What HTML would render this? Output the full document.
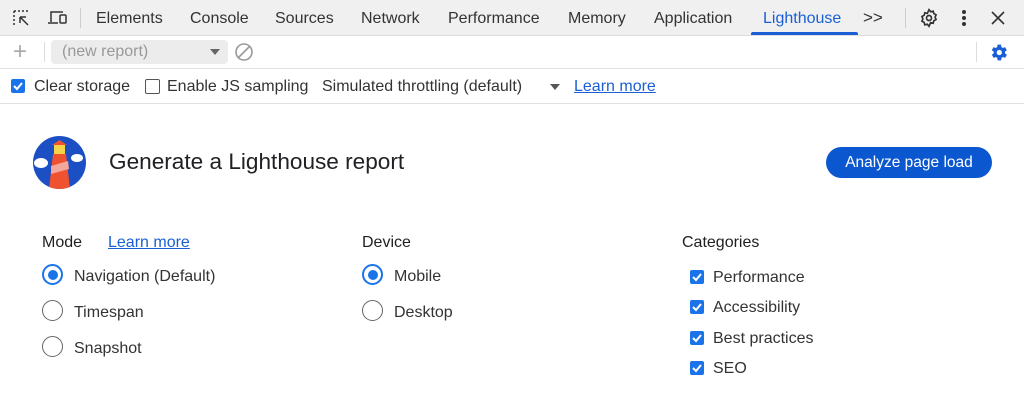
<!DOCTYPE html><html><head><style>
*{box-sizing:border-box;margin:0;padding:0}
body{width:1024px;height:404px;overflow:hidden;background:#fff;font-family:"Liberation Sans",sans-serif;color:#1f1f1f;position:relative}
.a{position:absolute;white-space:nowrap}
.tabs{position:absolute;left:0;top:0;width:1024px;height:36px;background:#f0f0f0;border-bottom:1px solid #ddd}
.t{position:absolute;top:10px;font-size:16px;color:#333}
.row2{position:absolute;top:36px;left:0;width:1024px;height:33px;border-bottom:1px solid #e0e0e0}
.row3{position:absolute;top:69px;left:0;width:1024px;height:35px;border-bottom:1px solid #e0e0e0}
.f{font-size:16px;color:#333}
.radio{position:absolute;width:21px;height:21px;border-radius:50%;border:1.5px solid #666}
.radio.on{border:2px solid #1a73e8}
.radio.on::after{content:"";position:absolute;left:3.5px;top:3.5px;width:10px;height:10px;border-radius:50%;background:#1a73e8}
.cb{position:absolute;width:14px;height:14px;border-radius:2px;background:#1a73e8}
.cb svg{position:absolute;left:1px;top:1px}
.lk{color:#1a5fd6;text-decoration:underline}
</style></head><body>
<div class="tabs">
<svg class="a" style="left:12px;top:9px" width="20" height="20" viewBox="0 0 20 20" fill="none" stroke="#333" stroke-width="1.5"><path d="M2 2h2M6 2h2M10 2h2M14 2h2M2 2v2M2 6v2M2 10v2M2 14v2" stroke-dasharray="2 2"/><path d="M8 8l8 8M8 8h6M8 8v6"/></svg>
<svg class="a" style="left:47px;top:9px" width="22" height="18" viewBox="0 0 22 18" fill="none" stroke="#333" stroke-width="1.5"><path d="M4 13V3h12M1 14h10"/><rect x="13" y="6" width="6" height="8" rx="1"/></svg>
<div class="a" style="left:80px;top:8px;width:1px;height:20px;background:#ccc"></div>
<div class="t" style="left:96px">Elements</div>
<div class="t" style="left:190px">Console</div>
<div class="t" style="left:275px">Sources</div>
<div class="t" style="left:361px">Network</div>
<div class="t" style="left:448px">Performance</div>
<div class="t" style="left:568px">Memory</div>
<div class="t" style="left:654px">Application</div>
<div class="t" style="left:763px;color:#1a5fd6">Lighthouse</div>
<div class="a" style="left:751px;top:32px;width:107px;height:3px;background:#1a5fd6;border-radius:2px 2px 0 0"></div>
<div class="t" style="left:863px;top:8px;font-size:17px">&gt;&gt;</div>
<div class="a" style="left:905px;top:8px;width:1px;height:20px;background:#ccc"></div>
<svg class="a" style="left:919px;top:8px" width="20" height="20" viewBox="0 0 24 24" fill="none" stroke="#333" stroke-width="2"><circle cx="12" cy="12" r="3"/><path d="M12 2l2 2.5 3-.8.8 3 2.7 1.5-1.2 2.8 1.2 2.8-2.7 1.5-.8 3-3-.8L12 22l-2-2.5-3 .8-.8-3-2.7-1.5 1.2-2.8-1.2-2.8 2.7-1.5.8-3 3 .8z"/></svg>
<div class="a" style="left:962px;top:10px;width:4px;height:4px;border-radius:2px;background:#333;box-shadow:0 6px 0 #333,0 12px 0 #333"></div>
<svg class="a" style="left:991px;top:11px" width="14" height="14" viewBox="0 0 14 14" stroke="#333" stroke-width="1.6"><path d="M1 1l12 12M13 1L1 13"/></svg>
</div>
<div class="row2">
<div class="a" style="left:13px;top:2px;font-size:24px;color:#aaa;font-weight:300">+</div>
<div class="a" style="left:44px;top:6px;width:1px;height:20px;background:#ddd"></div>
<div class="a" style="left:51px;top:4px;width:177px;height:24px;background:#ececec;border-radius:4px"></div>
<div class="a f" style="left:62px;top:7px;color:#999">(new report)</div>
<div class="a" style="left:210px;top:13px;border:5px solid transparent;border-top:6px solid #666"></div>
<svg class="a" style="left:234px;top:6px" width="20" height="20" viewBox="0 0 20 20" fill="none" stroke="#999" stroke-width="1.6"><circle cx="10" cy="10" r="8"/><path d="M4.5 15.5l11-11"/></svg>
<div class="a" style="left:976px;top:6px;width:1px;height:20px;background:#ddd"></div>
<svg class="a" style="left:988px;top:6px" width="21" height="21" viewBox="0 0 24 24"><path fill="#1a5fd6" d="M19.4 13a7.5 7.5 0 000-2l2.1-1.6-2-3.5-2.5 1a7 7 0 00-1.7-1L14.9 3h-4l-.4 2.9a7 7 0 00-1.7 1l-2.5-1-2 3.5L6.5 11a7.5 7.5 0 000 2l-2.1 1.6 2 3.5 2.5-1a7 7 0 001.7 1l.4 2.9h4l.4-2.9a7 7 0 001.7-1l2.5 1 2-3.5z"/><circle cx="12.9" cy="12" r="3" fill="#fff"/></svg>
</div>
<div class="row3">
<div class="cb" style="left:11px;top:10px"><svg width="12" height="12" viewBox="0 0 12 12" fill="none" stroke="#fff" stroke-width="2"><path d="M2 6l3 3 5-6"/></svg></div>
<div class="a f" style="left:34px;top:9px">Clear storage</div>
<div class="a" style="left:145px;top:10px;width:15px;height:15px;border:1.5px solid #555;border-radius:2px"></div>
<div class="a f" style="left:167px;top:9px">Enable JS sampling</div>
<div class="a f" style="left:322px;top:9px">Simulated throttling (default)</div>
<div class="a" style="left:550px;top:15px;border:5px solid transparent;border-top:6px solid #555"></div>
<div class="a f lk" style="left:574px;top:9px">Learn more</div>
</div>
<svg class="a" style="left:33px;top:136px" width="53" height="53" viewBox="0 0 53 53"><defs><clipPath id="c"><circle cx="26.5" cy="26.5" r="26.5"/></clipPath></defs><circle cx="26.5" cy="26.5" r="26.5" fill="#1d4fc4"/><g clip-path="url(#c)"><path d="M20 18h13l4 35H16z" fill="#f0522f"/><rect x="21" y="9" width="11" height="9" fill="#f4d24a"/><path d="M19 9l7.5-5 7.5 5z" fill="#f0522f"/><path d="M18 30l17-5 1 8-18 5z" fill="#f4a89b"/><ellipse cx="8" cy="27" rx="7" ry="5" fill="#fff"/><ellipse cx="44" cy="22" rx="6" ry="4" fill="#fff"/></g></svg>
<div class="a" style="left:109px;top:149px;font-size:22.6px;color:#202124">Generate a Lighthouse report</div>
<div class="a" style="left:826px;top:147px;width:166px;height:31px;border-radius:16px;background:#0b57d0;color:#fff;font-size:15.5px;text-align:center;line-height:31px">Analyze page load</div>
<div class="a f" style="left:42px;top:234px;color:#1f1f1f">Mode</div>
<div class="a f lk" style="left:108px;top:234px">Learn more</div>
<div class="radio on" style="left:42px;top:264px"></div><div class="a f" style="left:74px;top:268px">Navigation (Default)</div>
<div class="radio" style="left:42px;top:300px"></div><div class="a f" style="left:74px;top:304px">Timespan</div>
<div class="radio" style="left:42px;top:336px"></div><div class="a f" style="left:74px;top:340px">Snapshot</div>
<div class="a f" style="left:362px;top:234px;color:#1f1f1f">Device</div>
<div class="radio on" style="left:362px;top:264px"></div><div class="a f" style="left:394px;top:268px">Mobile</div>
<div class="radio" style="left:362px;top:300px"></div><div class="a f" style="left:394px;top:304px">Desktop</div>
<div class="a f" style="left:682px;top:234px;color:#1f1f1f">Categories</div>
<div class="cb" style="left:690px;top:270px"><svg width="12" height="12" viewBox="0 0 12 12" fill="none" stroke="#fff" stroke-width="2"><path d="M2 6l3 3 5-6"/></svg></div><div class="a f" style="left:713px;top:269px">Performance</div>
<div class="cb" style="left:690px;top:300px"><svg width="12" height="12" viewBox="0 0 12 12" fill="none" stroke="#fff" stroke-width="2"><path d="M2 6l3 3 5-6"/></svg></div><div class="a f" style="left:713px;top:299px">Accessibility</div>
<div class="cb" style="left:690px;top:331px"><svg width="12" height="12" viewBox="0 0 12 12" fill="none" stroke="#fff" stroke-width="2"><path d="M2 6l3 3 5-6"/></svg></div><div class="a f" style="left:713px;top:330px">Best practices</div>
<div class="cb" style="left:690px;top:361px"><svg width="12" height="12" viewBox="0 0 12 12" fill="none" stroke="#fff" stroke-width="2"><path d="M2 6l3 3 5-6"/></svg></div><div class="a f" style="left:713px;top:360px">SEO</div>
</body></html>
